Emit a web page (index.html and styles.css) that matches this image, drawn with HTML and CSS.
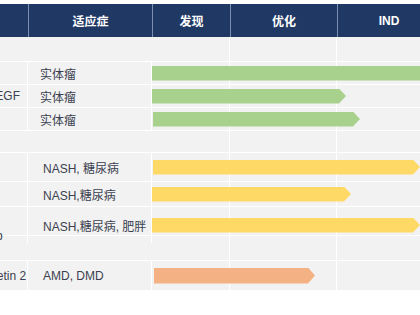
FILE: index.html
```html
<!DOCTYPE html>
<html>
<head>
<meta charset="utf-8">
<link rel="stylesheet" href="styles.css">
</head>
<body>
<div class="sheet">
  <div class="row head">
    <div class="hc">靶点</div>
    <div class="hc sep">适应症</div>
    <div class="hc sep">发现</div>
    <div class="hc sep">优化</div>
    <div class="hc sep">IND</div>
  </div>

  <div class="row group g25"><div class="gspan"></div><div class="track"></div></div>

  <div class="row h23">
    <div class="c name">PD-1</div>
    <div class="c ind">实体瘤</div>
    <div class="track"><div class="bar green" style="width:300px"></div></div>
  </div>
  <div class="row h23">
    <div class="c name">PD-L1/VEGF</div>
    <div class="c ind">实体瘤</div>
    <div class="track"><div class="bar green" style="width:194px"></div></div>
  </div>
  <div class="row h23">
    <div class="c name">TIGIT</div>
    <div class="c ind">实体瘤</div>
    <div class="track"><div class="bar green lead" style="width:207px"></div></div>
  </div>

  <div class="row group g22"><div class="gspan"></div><div class="track"></div></div>

  <div class="row h29">
    <div class="c name">FGF21</div>
    <div class="c ind wide">NASH, 糖尿病</div>
    <div class="track"><div class="bar yellow lead" style="width:267px"></div></div>
  </div>
  <div class="row h25">
    <div class="c name">GLP-1</div>
    <div class="c ind wide">NASH,糖尿病</div>
    <div class="track"><div class="bar yellow" style="width:199px"></div></div>
  </div>
  <div class="row h29">
    <div class="c name two">GLP-1/<br>GIP/Amp</div>
    <div class="c ind wide">NASH,糖尿病, 肥胖</div>
    <div class="track"><div class="bar yellow" style="width:268px"></div></div>
  </div>

  <div class="row group g25"><div class="gspan"></div><div class="track"></div></div>

  <div class="row h30">
    <div class="c name">Angiopoietin 2</div>
    <div class="c ind wide">AMD, DMD</div>
    <div class="track"><div class="bar orange lead2" style="width:161px"></div></div>
  </div>
</div>
</body>
</html>
```

FILE: styles.css
```css
html, body {
  margin: 0;
  padding: 0;
  background: #ffffff;
  overflow: hidden;
}

body {
  padding-top: 4px;
  font-family: "Liberation Sans", "Noto Sans CJK SC", sans-serif;
  font-size: 12px;
}

.sheet {
  width: 512px;
  margin-left: -72px;
  background: #f2f2f2;
}

.row {
  display: grid;
  grid-template-columns: 100px 124px 78px 107px 103px;
  box-sizing: border-box;
  border-bottom: 1px solid #ffffff;
}

.head {
  height: 33px;
  background: #1f3864;
  border-bottom: none;
}

.hc {
  display: flex;
  align-items: center;
  justify-content: center;
  color: #ffffff;
  font-weight: bold;
  font-size: 12px;
  font-family: "Liberation Sans", "Noto Sans CJK SC", sans-serif;
}

.hc.sep {
  border-left: 1px solid #7d8fb0;
}

.g25 { height: 25px; }
.g22 { height: 22px; }
.h23 { height: 23px; }
.h25 { height: 25px; }
.h29 { height: 29px; }
.h30 { height: 30px; }

.gspan {
  grid-column: 1 / 3;
}

.c {
  display: flex;
  align-items: center;
  color: #3b3f4f;
  white-space: nowrap;
  border-right: 1px solid #ffffff;
}

.name {
  padding-left: 22px;
  line-height: 14px;
}

.name.two {
  padding-top: 8px;
  padding-left: 26px;
}

.ind {
  padding-left: 12px;
}

.ind.wide {
  padding-left: 15px;
}

.track {
  grid-column: 3 / 6;
  display: flex;
  align-items: center;
  background-image: linear-gradient(#ffffff, #ffffff), linear-gradient(#ffffff, #ffffff);
  background-size: 1px 100%, 1px 100%;
  background-position: 77px 0, 184px 0;
  background-repeat: no-repeat;
}

.bar {
  height: 15px;
  clip-path: polygon(0 0, calc(100% - 7px) 0, 100% 50%, calc(100% - 7px) 100%, 0 100%);
}

.bar.lead { margin-left: 1px; }
.bar.lead2 { margin-left: 2px; height: 16px; }

.green { background: #a9d18e; }
.yellow { background: #ffd966; }
.orange { background: #f4b183; }
```
